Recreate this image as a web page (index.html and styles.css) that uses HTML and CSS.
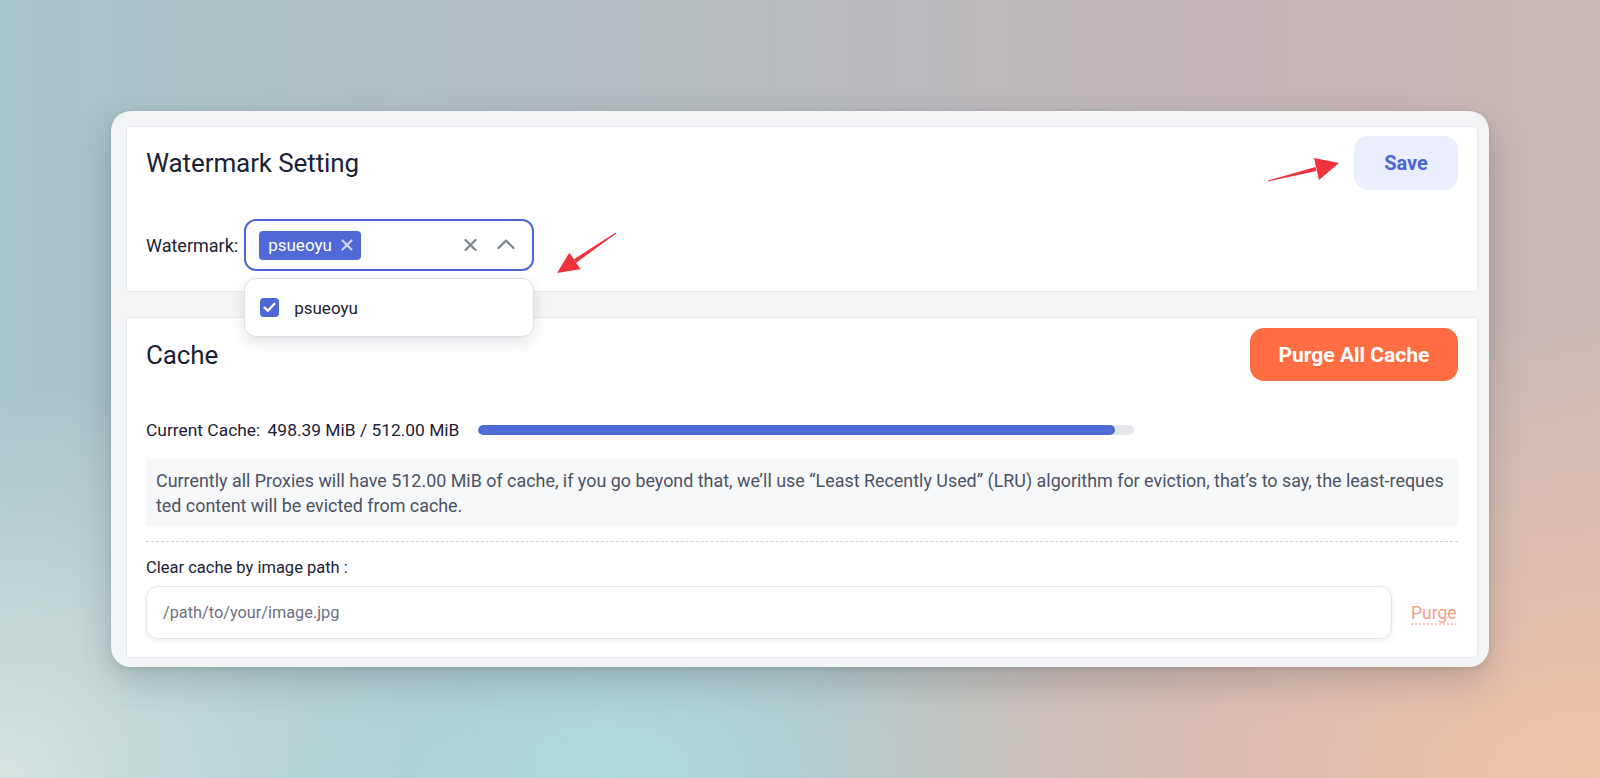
FILE: index.html
```html
<!DOCTYPE html>
<html lang="en">
<head>
<meta charset="utf-8">
<title>Settings</title>
<link rel="stylesheet" href="styles.css">
</head>
<body>
<div class="stage">
  <div class="card">
    <section class="panel panel-watermark">
      <div class="panel-head">
        <h2 class="panel-title">Watermark Setting</h2>
        <button class="btn btn-save">Save</button>
      </div>
      <div class="field-row">
        <span class="field-label">Watermark:</span>
        <div class="select">
          <span class="tag">psueoyu
            <svg class="tag-x" width="12" height="12" viewBox="0 0 12 12"><path d="M1.5 1.5L10.5 10.5M10.5 1.5L1.5 10.5" stroke="currentColor" stroke-width="2.2" stroke-linecap="round"/></svg>
          </span>
          <span class="select-spacer"></span>
          <svg class="sel-clear" width="13" height="12" viewBox="0 0 13 12"><path d="M1.5 1L11.5 11M11.5 1L1.5 11" stroke="currentColor" stroke-width="2.2" stroke-linecap="round"/></svg>
          <svg class="sel-chevron" width="18" height="10" viewBox="0 0 18 10"><path d="M1.5 9L9 1.6L16.5 9" fill="none" stroke="currentColor" stroke-width="2.2" stroke-linecap="round" stroke-linejoin="round"/></svg>
          <div class="dropdown">
            <div class="option">
              <span class="checkbox"><svg width="13" height="11" viewBox="0 0 13 11"><path d="M1.6 5.6L4.9 8.8L11.4 1.8" fill="none" stroke="#fff" stroke-width="2.3" stroke-linecap="round" stroke-linejoin="round"/></svg></span>
              <span class="option-text">psueoyu</span>
            </div>
          </div>
        </div>
      </div>
    </section>

    <section class="panel panel-cache">
      <div class="panel-head">
        <h2 class="panel-title">Cache</h2>
        <button class="btn btn-purge-all">Purge All Cache</button>
      </div>
      <div class="usage-row">
        <span class="usage-text">Current Cache: <span class="usage-value">498.39 MiB / 512.00 MiB</span></span>
        <div class="progress"><div class="progress-fill" style="width:97.1%"></div></div>
      </div>
      <div class="info">Currently all Proxies will have 512.00 MiB of cache, if you go beyond that, we’ll use “Least Recently Used” (LRU) algorithm for eviction, that’s to say, the least-reques<br>ted content will be evicted from cache.</div>
      <div class="divider"></div>
      <div class="path-label">Clear cache by image path :</div>
      <div class="path-row">
        <div class="path-input">/path/to/your/image.jpg</div>
        <a class="purge-link">Purge</a>
      </div>
    </section>
  </div>
</div>
<svg class="annotations" width="1600" height="778" viewBox="0 0 1600 778">
  <polygon points="1268.1,181.5 1267.9,180.5 1315.5,167.1 1316.5,170.9" fill="#f0323a"/>
  <polygon points="1339,163 1314,158 1319,180" fill="#f0323a"/>
  <polygon points="616.3,233.4 615.7,232.6 573.9,259.3 576.1,262.7" fill="#f0323a"/>
  <polygon points="557,273 580.6,269.3 569.4,252.7" fill="#f0323a"/>
</svg>
</body>
</html>
```

FILE: styles.css
```css
* { box-sizing: border-box; }
html, body { margin: 0; padding: 0; }
body {
  width: 1600px;
  height: 778px;
  overflow: hidden;
  position: relative;
  font-family: Roboto, "Liberation Sans", sans-serif;
  color: #1c2233;
  background:
    radial-gradient(ellipse 50% 60% at 100% 100%, #f0c3aa 0%, rgba(240,195,170,0) 100%),
    radial-gradient(ellipse 35% 45% at 38% 100%, #b0dbdb 0%, rgba(176,219,219,0) 100%),
    radial-gradient(ellipse 30% 50% at 0% 100%, #d4e3e0 0%, rgba(212,227,224,0) 100%),
    linear-gradient(90deg, #a8c5c8 0%, #b6bcc0 45%, #c2b6b9 75%, #cbb8b4 100%);
}
.stage {
  padding: 111px 0 0 111px;
}
.card {
  width: 1378px;
  height: 556px;
  background: #f3f4f6;
  border-radius: 20px;
  padding: 15px 11px 9px 15px;
  display: flex;
  flex-direction: column;
  gap: 25px;
  box-shadow: 0 14px 36px rgba(40, 50, 60, 0.22), 0 2px 6px rgba(40,50,60,0.10);
  overflow: hidden;
}
.panel {
  background: #fff;
  border: 1px solid #e4e7eb;
  border-radius: 4px;
  padding: 9px 19px 0 19px;
  flex-shrink: 0;
}
.panel-watermark { height: 166px; }
.panel-cache { flex: 1; padding-top: 10px; }
.panel-head {
  display: flex;
  justify-content: space-between;
  align-items: center;
}
.panel-watermark .panel-head { height: 54px; }
.panel-cache .panel-head { height: 53px; }
.panel-title {
  margin: 0;
  font-weight: 400;
  font-size: 26px;
  color: #1b2238;
  letter-spacing: -0.1px;
}
.btn {
  border: 0;
  font-family: inherit;
  font-weight: 700;
  cursor: pointer;
}
.btn-save {
  width: 104px;
  height: 54px;
  border-radius: 14px;
  background: #ebeffd;
  color: #4c66d3;
  font-size: 20px;
}
.btn-purge-all {
  width: 208px;
  height: 53px;
  border-radius: 14px;
  background: #ff6e42;
  color: #fff;
  font-size: 21px;
}
.field-row {
  margin-top: 29px;
  display: flex;
  align-items: center;
  gap: 6px;
}
.field-label {
  font-size: 18px;
  color: #1c2233;
}
.select {
  position: relative;
  width: 290px;
  height: 52px;
  border: 2px solid #4d68d5;
  border-radius: 12px;
  display: flex;
  align-items: center;
  padding: 0 17px 0 13px;
}
.tag {
  display: inline-flex;
  align-items: center;
  gap: 9px;
  height: 29px;
  padding: 0 8px 0 9px;
  background: #5169d6;
  color: #fff;
  border-radius: 4px;
  font-size: 17px;
}
.tag-x { color: rgba(255,255,255,0.72); }
.select-spacer { flex: 1; }
.sel-clear { color: #7e848b; margin-right: 20px; }
.sel-chevron { color: #7e848b; margin-bottom: 2px; }
.dropdown {
  position: absolute;
  left: -2px;
  top: 57px;
  width: 290px;
  height: 59px;
  background: #fff;
  border: 1px solid #dcdfe3;
  border-radius: 12px;
  box-shadow: 0 6px 14px rgba(30, 40, 60, 0.12);
  display: flex;
  align-items: center;
  padding-left: 15px;
  z-index: 5;
}
.option { display: flex; align-items: center; gap: 15px; }
.checkbox {
  width: 19px;
  height: 19px;
  border-radius: 4px;
  background: #4f68d6;
  display: inline-flex;
  align-items: center;
  justify-content: center;
}
.option-text { font-size: 17px; color: #1c2233; }

.usage-row {
  margin-top: 37px;
  height: 24px;
  display: flex;
  align-items: center;
  gap: 19px;
}
.usage-text { font-size: 17.4px; color: #1c2233; }
.usage-value { margin-left: 3px; }
.progress {
  width: 656px;
  height: 10px;
  border-radius: 5px;
  background: #e6e7ea;
  overflow: hidden;
}
.progress-fill {
  height: 100%;
  background: #4f6bd6;
  border-radius: 5px;
}
.info {
  margin-top: 17px;
  background: #f7f8fa;
  border-radius: 4px;
  padding: 9px 10px 8px 10px;
  font-size: 17.9px;
  line-height: 25px;
  color: #4b5263;
  white-space: nowrap;
  overflow: hidden;
}
.divider {
  margin-top: 15px;
  border-top: 1px dashed #cfd5df;
}
.path-label {
  margin-top: 16px;
  font-size: 16.5px;
  line-height: 20px;
  color: #1c2233;
}
.path-row {
  margin-top: 8px;
  display: flex;
  align-items: center;
  gap: 19px;
}
.path-input {
  width: 1246px;
  height: 53px;
  border: 1px solid #e4e6ea;
  border-radius: 12px;
  box-shadow: 0 2px 5px rgba(30, 40, 60, 0.08);
  display: flex;
  align-items: center;
  padding-left: 16px;
  font-size: 16.3px;
  color: #6b7180;
}
.purge-link {
  font-size: 17.5px;
  color: #f7a189;
  text-decoration: underline dotted #f3c1b1;
  text-underline-offset: 5px;
}
.annotations {
  position: absolute;
  left: 0;
  top: 0;
  pointer-events: none;
}
```
